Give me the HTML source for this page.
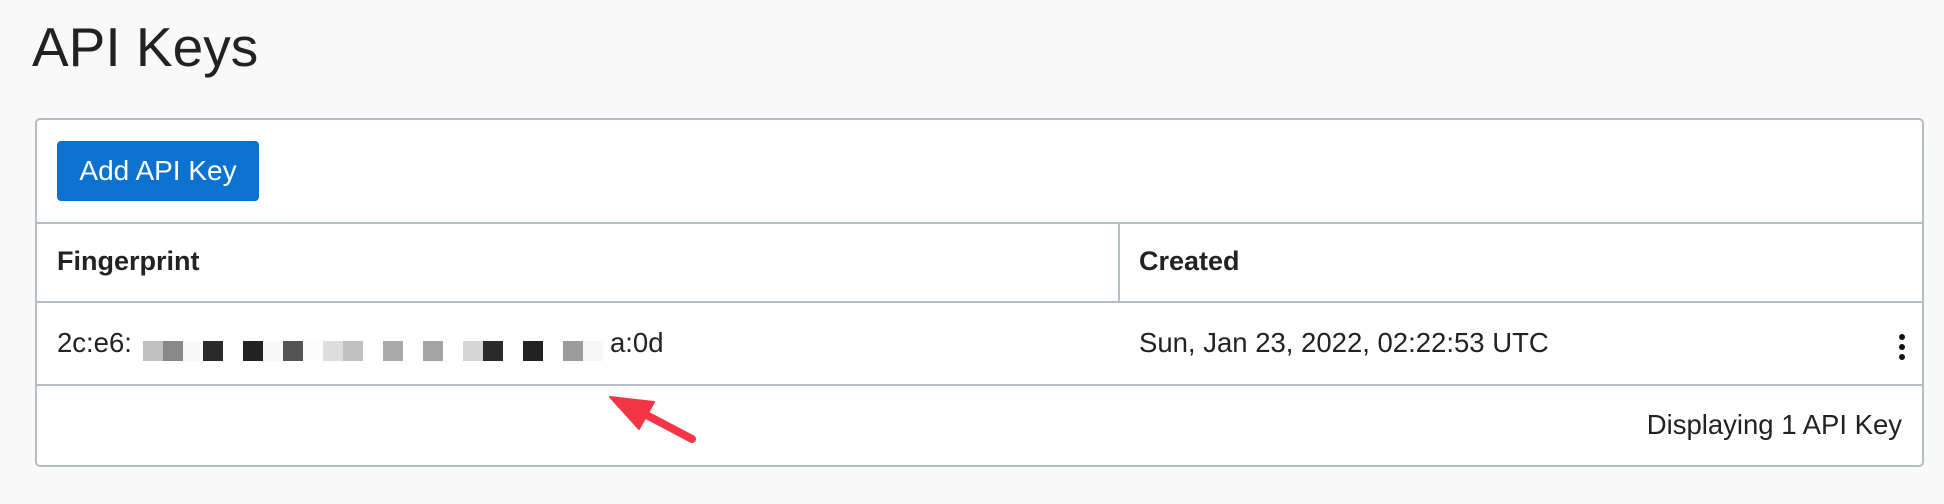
<!DOCTYPE html>
<html><head><meta charset="utf-8"><style>
*{margin:0;padding:0;box-sizing:border-box}
body{width:1944px;height:504px;background:#f9f9fa;font-family:"Liberation Sans",Arial,sans-serif;color:#222;position:relative;overflow:hidden}
.t{position:absolute;left:32px;top:14px;font-size:55px;line-height:66px;color:#222}
.box{position:absolute;left:35px;top:118px;width:1889px;height:349px;background:#fff;border:2px solid #b6bcc6;border-radius:5px}
.btn{position:absolute;left:20px;top:21px;width:202px;height:60px;background:#0b72d0;border-radius:4px;color:#fff;font-size:28px;line-height:60px;text-align:center}
.h{position:absolute;left:0;right:0;height:2px;background:#b6bcc6}
.v{position:absolute;left:1081px;top:103px;width:2px;height:79px;background:#b6bcc6}
.tx{position:absolute;font-size:27.5px;line-height:32px;white-space:nowrap}
.b{font-weight:bold;font-size:27px}
.px{position:absolute;top:221px;height:20px;width:20.3px}
.dot{position:absolute;width:6px;height:6px;border-radius:50%;background:#111;left:1862px}
</style></head><body>
<div class="t">API Keys</div>
<div class="box">
<div class="btn">Add API Key</div>
<div class="h" style="top:102px"></div>
<div class="v"></div>
<div class="tx b" style="left:20px;top:125px">Fingerprint</div>
<div class="tx b" style="left:1102px;top:125px">Created</div>
<div class="h" style="top:181px"></div>
<div class="tx" style="left:20px;top:207px">2c:e6:</div>
<div class="tx" style="left:573px;top:207px">a:0d</div>
<div class="px" style="left:106px;background:#c0c0c0"></div>
<div class="px" style="left:126px;background:#888"></div>
<div class="px" style="left:146px;background:#f8f8f8"></div>
<div class="px" style="left:166px;background:#2a2a2a"></div>
<div class="px" style="left:206px;background:#222"></div>
<div class="px" style="left:226px;background:#f8f8f8"></div>
<div class="px" style="left:246px;background:#555"></div>
<div class="px" style="left:266px;background:#fcfcfc"></div>
<div class="px" style="left:286px;background:#ddd"></div>
<div class="px" style="left:306px;background:#c0c0c0"></div>
<div class="px" style="left:346px;background:#aaa"></div>
<div class="px" style="left:386px;background:#a4a4a4"></div>
<div class="px" style="left:426px;background:#d6d6d6"></div>
<div class="px" style="left:446px;background:#2a2a2a"></div>
<div class="px" style="left:486px;background:#222"></div>
<div class="px" style="left:526px;background:#9c9c9c"></div>
<div class="px" style="left:546px;background:#f6f6f6"></div>
<div class="tx" style="left:1102px;top:207px">Sun, Jan 23, 2022, 02:22:53 UTC</div>
<div class="dot" style="top:214px"></div>
<div class="dot" style="top:224px"></div>
<div class="dot" style="top:234px"></div>
<div class="h" style="top:264px"></div>
<div class="tx" style="right:20px;top:289px">Displaying 1 API Key</div>
</div>
<svg style="position:absolute;left:0;top:0" width="1944" height="504">
<line x1="692" y1="439" x2="635" y2="409" stroke="#f23645" stroke-width="8" stroke-linecap="round"/>
<polygon points="610,397 654,402 639,429" fill="#f23645" stroke="#f23645" stroke-width="2" stroke-linejoin="round"/>
</svg>
</body></html>
